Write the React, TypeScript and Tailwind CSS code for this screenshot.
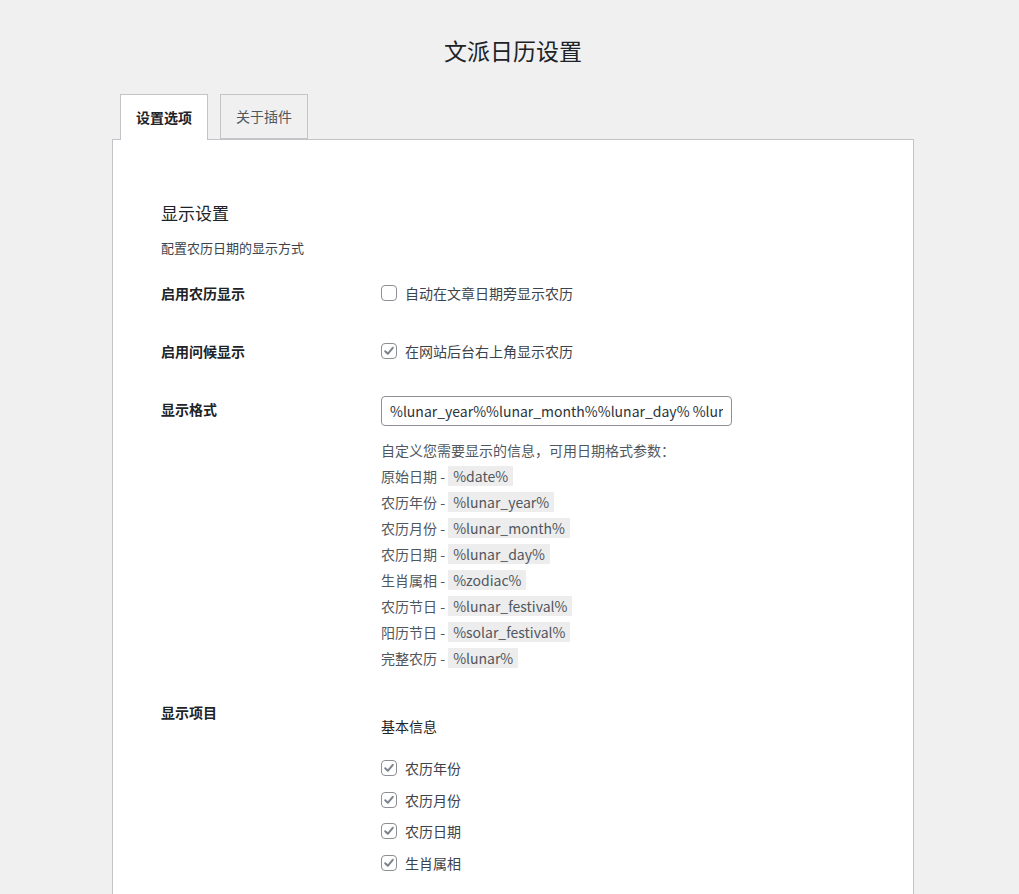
import React from 'react';

const params: [string, string][] = [
  ['原始日期', '%date%'],
  ['农历年份', '%lunar_year%'],
  ['农历月份', '%lunar_month%'],
  ['农历日期', '%lunar_day%'],
  ['生肖属相', '%zodiac%'],
  ['农历节日', '%lunar_festival%'],
  ['阳历节日', '%solar_festival%'],
  ['完整农历', '%lunar%'],
];

const basicItems = ['农历年份', '农历月份', '农历日期', '生肖属相'];

const Checkbox: React.FC<{ checked?: boolean }> = ({ checked }) => (
  <span className="w-4 h-4 border border-[#8c8f94] rounded-[4px] bg-white flex items-center justify-center shrink-0">
    {checked && (
      <svg width="12" height="12" viewBox="0 0 12 12" fill="none">
        <path d="M2.2 6.2 L4.8 8.8 L9.8 2.8" stroke="#7b838c" strokeWidth="2" strokeLinecap="round" strokeLinejoin="round" />
      </svg>
    )}
  </span>
);

const CheckRow: React.FC<{ checked?: boolean; label: string }> = ({ checked, label }) => (
  <label className="flex items-center gap-2 leading-[18px] text-[14px] text-[#3c434a]">
    <Checkbox checked={checked} />
    <span>{label}</span>
  </label>
);

const Th: React.FC<{ children: React.ReactNode }> = ({ children }) => (
  <div className="w-[220px] shrink-0 pt-5 text-[14px] leading-[18px] font-bold text-[#1d2327]">{children}</div>
);

export default function App() {
  return (
    <div
      className="min-h-screen bg-[#f0f0f1] text-[#3c434a]"
      style={{ fontFamily: '"Noto Sans CJK SC", "Noto Sans", sans-serif' }}
    >
      <div className="ml-[112px] w-[802px] pt-[35px]">
        <h1 className="text-center text-[23px] leading-[30px] font-normal text-[#1d2327]">文派日历设置</h1>

        <div className="flex gap-3 pl-2 mt-[29px] relative z-10">
          <div className="w-[88px] h-[46px] border border-b-0 border-[#c3c4c7] bg-white flex items-center justify-center text-[14px] font-bold text-[#1d2327]">
            设置选项
          </div>
          <div className="w-[88px] h-[45px] border border-[#c3c4c7] bg-[#f0f0f1] flex items-center justify-center text-[14px] text-[#50575e]">
            关于插件
          </div>
        </div>

        <div className="-mt-px border border-[#c3c4c7] bg-white pl-12 pr-12 pt-[62px] pb-10">
          <h2 className="text-[17px] leading-[22px] text-[#1d2327]">显示设置</h2>
          <p className="mt-[14px] text-[13px] leading-[20px] text-[#3c434a]">配置农历日期的显示方式</p>

          <div className="mt-[6px]">
            <div className="flex h-[58px]">
              <Th>启用农历显示</Th>
              <div className="pt-5">
                <CheckRow label="自动在文章日期旁显示农历" />
              </div>
            </div>

            <div className="flex h-[58px]">
              <Th>启用问候显示</Th>
              <div className="pt-5">
                <CheckRow checked label="在网站后台右上角显示农历" />
              </div>
            </div>

            <div className="flex">
              <Th>显示格式</Th>
              <div className="pt-[16px] pb-[12px]">
                <input
                  type="text"
                  defaultValue="%lunar_year%%lunar_month%%lunar_day% %lunar_festival%"
                  className="w-[351px] h-[30px] border border-[#8c8f94] rounded-[4px] px-2 text-[14px] text-[#2c3338] outline-none"
                />
                <div className="mt-[11px] text-[14px] leading-[26px] text-[#50575e]">
                  <div>自定义您需要显示的信息，可用日期格式参数：</div>
                  {params.map(([name, code]) => (
                    <div key={code}>
                      {name} - <code className="bg-[#ededed] px-[5px] py-0 text-[#50575e]" style={{ fontFamily: 'inherit' }}>{code}</code>
                    </div>
                  ))}
                </div>
              </div>
            </div>

            <div className="flex">
              <Th>显示项目</Th>
              <div className="pt-[34px]">
                <div className="text-[14px] leading-[18px] text-[#1d2327]">基本信息</div>
                <div className="mt-[24px] flex flex-col gap-[13.5px]">
                  {basicItems.map((item) => (
                    <CheckRow key={item} checked label={item} />
                  ))}
                </div>
              </div>
            </div>
          </div>
        </div>
      </div>
    </div>
  );
}
